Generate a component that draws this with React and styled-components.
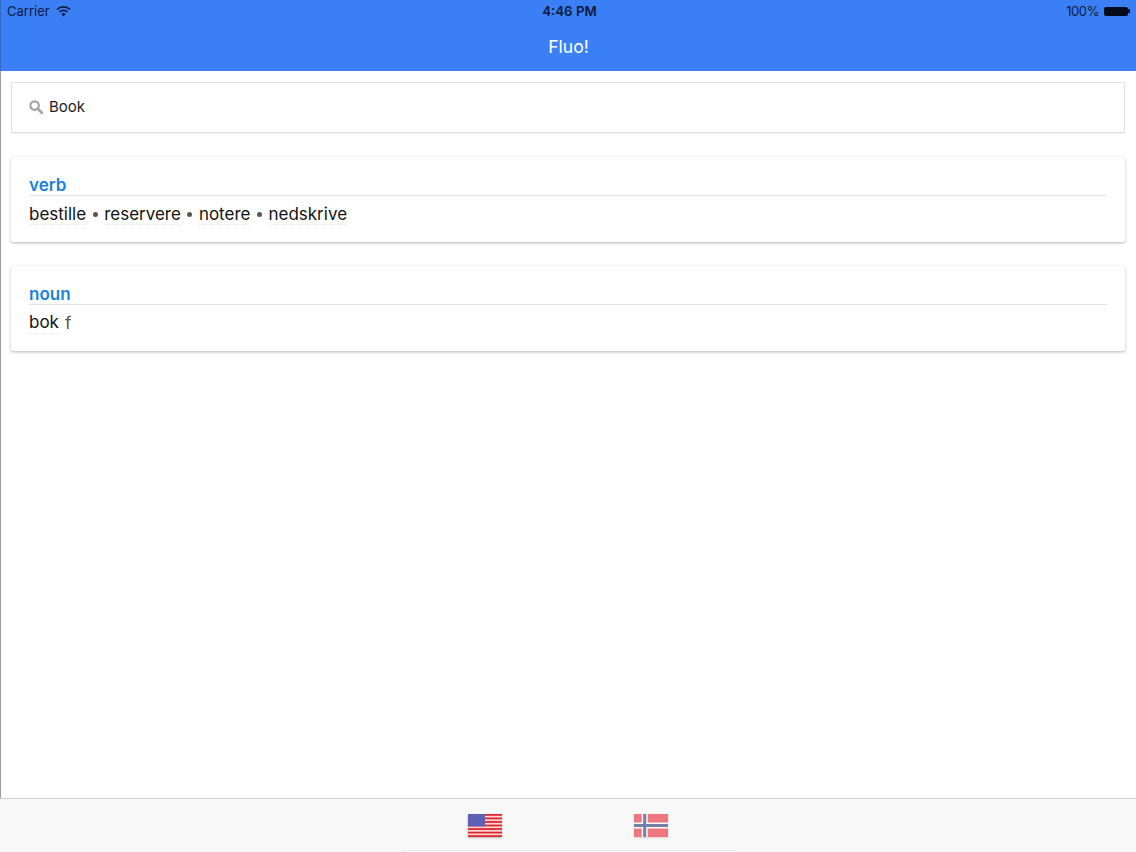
import React from 'react'
import styled, { createGlobalStyle } from 'styled-components'

const GlobalStyle = createGlobalStyle`
    html, body {
        margin: 0;
        padding: 0;
        background: #fff;
    }
    body {
        font-family: "Inter", "Liberation Sans", sans-serif;
    }
`;

const Page = styled.div`
    width: 1136px;
    height: 852px;
    display: flex;
    flex-direction: column;
    overflow: hidden;
    background: #fff;
`;

const Header = styled.header`
    height: 71px;
    flex: none;
    box-sizing: border-box;
    display: flex;
    flex-direction: column;
    background: #3a7ff6;
    border-left: 1px solid #3469c4;
`;

const StatusBar = styled.div`
    height: 22px;
    padding: 0 6px;
    display: grid;
    grid-template-columns: 1fr auto 1fr;
    align-items: center;
    font-size: 13px;
    color: #0a1a3c;
`;

const StatusLeft = styled.div`
    display: flex;
    align-items: center;
    gap: 6px;
`;

const StatusTime = styled.div`
    padding-left: 2px;
    font-size: 13.3px;
    font-weight: 600;
`;

const StatusRight = styled.div`
    display: flex;
    align-items: center;
    justify-content: flex-end;
    gap: 5px;
    letter-spacing: -0.4px;
`;

const Battery = styled.div`
    width: 24px;
    height: 9px;
    border-radius: 2px;
    background: #050b1c;
`;

const BatteryTip = styled.div`
    width: 2px;
    height: 4px;
    margin-left: -5px;
    background: #050b1c;
`;

const Title = styled.div`
    flex: 1;
    display: flex;
    align-items: center;
    justify-content: center;
    color: #fff;
    font-size: 17.6px;
`;

const Content = styled.main`
    flex: 1;
    padding: 11px 11px 0 10px;
    display: flex;
    flex-direction: column;
    border-left: 1px solid #9a9a9a;
`;

const SearchBox = styled.div`
    height: 51px;
    box-sizing: border-box;
    display: flex;
    align-items: center;
    gap: 6px;
    padding: 0 0 2px 17px;
    border: 1px solid #e2e2e2;
    box-shadow: 0 1px 1px rgba(0, 0, 0, 0.06);
    background: #fff;
    font-size: 15px;
    color: #1c1c1c;
    margin-bottom: 24px;
`;

const Card = styled.section`
    height: 85px;
    box-sizing: border-box;
    padding: 18px 18px 0;
    margin-bottom: 24px;
    border-radius: 2px;
    background: #fff;
    box-shadow: 0 1px 3px rgba(0, 0, 0, 0.3);
`;

const PartOfSpeech = styled.div`
    height: 20px;
    line-height: 20px;
    font-size: 17px;
    font-weight: 600;
    color: #1a82dc;
    border-bottom: 1px solid #e2e2e2;
`;

const Translations = styled.div`
    display: flex;
    align-items: center;
    margin-top: ${props => (props.$tight ? 7 : 8)}px;
    font-size: 17px;
    line-height: ${props => (props.$tight ? 21 : 20)}px;
    color: #111;
`;

const Word = styled.span`
    border-bottom: 1px dotted #e4e4e4;
`;

const Gender = styled.span`
    margin-left: 6px;
    color: #555;
`;

const Dot = styled.span`
    width: 5px;
    height: 5px;
    margin: 0 6.5px;
    border-radius: 50%;
    background: #555;
`;

const TabBar = styled.footer`
    height: 54px;
    flex: none;
    box-sizing: border-box;
    position: relative;
    border-top: 1px solid #cfcfcf;
    background: #f8f8f8;
    display: flex;
    justify-content: center;
    gap: 132px;
    padding-top: 15px;

    &::after {
        content: "";
        position: absolute;
        left: 402px;
        bottom: 1px;
        width: 333px;
        border-bottom: 1px dotted #dcdcdc;
    }
`;

const Flag = styled.svg`
    width: 34px;
    height: 23px;
    display: block;
    opacity: ${props => (props.$dim ? 0.6 : 1)};
    filter: blur(0.35px) drop-shadow(0 1px 1px rgba(0, 0, 0, 0.25));
`;

const WifiIcon = () => (
    <svg width="15" height="11" viewBox="0 0 15 11">
        <path d="M1 3.5 A9.5 9.5 0 0 1 14 3.5" fill="none" stroke="#0a1a3c" strokeWidth="1.7" />
        <path d="M3.4 6 A6 6 0 0 1 11.6 6" fill="none" stroke="#0a1a3c" strokeWidth="1.7" />
        <path d="M5.4 8 L7.5 10.6 L9.6 8 A3 3 0 0 0 5.4 8 Z" fill="#0a1a3c" />
    </svg>
);

const SearchIcon = () => (
    <svg width="14" height="14" viewBox="0 0 14 14">
        <circle cx="5.6" cy="5.6" r="4.2" fill="none" stroke="#a4a4a4" strokeWidth="2.2" />
        <path d="M9 9 L13 13" stroke="#a4a4a4" strokeWidth="2.6" strokeLinecap="round" />
    </svg>
);

const stripes = [0, 1, 2, 3, 4, 5, 6];

const UsFlag = () => (
    <Flag viewBox="0 0 34 23">
        <rect width="34" height="23" fill="#f6d6d6" />
        {stripes.map(i => (
            <rect key={i} y={(i * 23) / 6.5} width="34" height="1.77" fill="#e0242c" />
        ))}
        <rect width="17" height="12.4" fill="#5e60b4" />
    </Flag>
);

const NoFlag = () => (
    <Flag $dim viewBox="0 0 34 23">
        <rect width="34" height="23" fill="#e8202e" />
        <rect x="7.7" width="6" height="23" fill="#fff" />
        <rect y="8.5" width="34" height="6" fill="#fff" />
        <rect x="9.2" width="3" height="23" fill="#1c2f6e" />
        <rect y="10" width="34" height="3" fill="#1c2f6e" />
    </Flag>
);

const verbs = ["bestille", "reservere", "notere", "nedskrive"];

export default function App() {
    return (
        <Page>
            <GlobalStyle />
            <Header>
                <StatusBar>
                    <StatusLeft>Carrier <WifiIcon /></StatusLeft>
                    <StatusTime>4:46 PM</StatusTime>
                    <StatusRight>100% <Battery /><BatteryTip /></StatusRight>
                </StatusBar>
                <Title>Fluo!</Title>
            </Header>
            <Content>
                <SearchBox><SearchIcon />Book</SearchBox>
                <Card>
                    <PartOfSpeech>verb</PartOfSpeech>
                    <Translations>
                        {verbs.map((verb, i) => (
                            <React.Fragment key={verb}>
                                {i > 0 && <Dot />}
                                <Word>{verb}</Word>
                            </React.Fragment>
                        ))}
                    </Translations>
                </Card>
                <Card>
                    <PartOfSpeech>noun</PartOfSpeech>
                    <Translations $tight>
                        <Word>bok</Word>
                        <Gender>f</Gender>
                    </Translations>
                </Card>
            </Content>
            <TabBar>
                <UsFlag />
                <NoFlag />
            </TabBar>
        </Page>
    )
}
